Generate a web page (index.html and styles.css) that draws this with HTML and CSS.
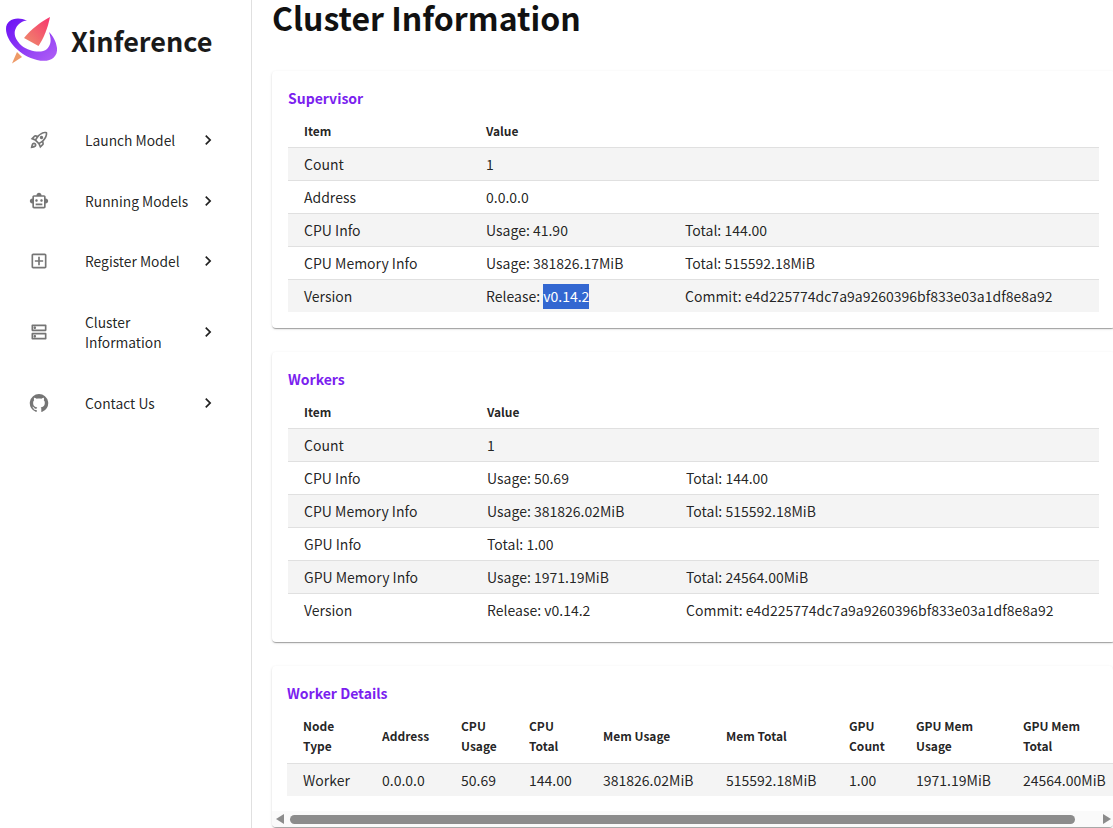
FILE: index.html
```html
<!DOCTYPE html>
<html lang="en">
<head>
<meta charset="utf-8">
<title>Xinference</title>
<link rel="stylesheet" href="styles.css">
</head>
<body>
<div class="app">
  <aside class="sidebar">
    <div class="brand">
      <svg class="logo" viewBox="6 16 52 48" width="52" height="48">
        <defs>
          <linearGradient id="ringGrad" x1="0" y1="0" x2="1" y2="1">
            <stop offset="0" stop-color="#6a10f5"/>
            <stop offset="1" stop-color="#b061f5"/>
          </linearGradient>
          <linearGradient id="kiteGrad" x1="0" y1="1" x2="1" y2="0">
            <stop offset="0" stop-color="#ee8f6c"/>
            <stop offset="1" stop-color="#f7346e"/>
          </linearGradient>
        </defs>
        <path fill="url(#kiteGrad)" d="M50 17 C42 21 31 29 24 38 L38.500 46 C44 38 48 27 50 17Z"/>
        <path fill="#ee9a68" d="M17 52 L22 57 L12 63.500Z"/>
        <path fill="url(#ringGrad)" d="M27 20.500 C17 16 6 19 6 29 C6 41 20 56 37 60 C49 63 58 58 57 48 C56 41 53 36 49 32 C51 38 52 44 47 49 C41 54 29 51 22 46 C15 40 13 33 16 28 C18 24 22 21 27 20.500Z"/>
      </svg>
      <span class="brand-name">Xinference</span>
    </div>
    <nav class="nav">
      <a class="nav-item">
        <svg class="nav-icon" viewBox="0 0 24 24"><path d="M6 15c-.83 0-1.58.34-2.12.88C2.7 17.06 2 22 2 22s4.940-.7 6.120-1.880c.54-.54.88-1.290.88-2.120 0-1.660-1.340-3-3-3zm.71 3.710c-.28.28-2.170.76-2.170.76s.47-1.880.76-2.170c.17-.19.42-.3.7-.3.55 0 1 .45 1 1 0 .28-.11.53-.29.71zm10.710-5.060c6.360-6.360 4.240-11.310 4.240-11.310S16.710.22 10.350 6.580l-2.490-.5c-.65-.13-1.330.08-1.810.55L2 10.690l5 2.140L11.170 17l2.140 5 4.050-4.050c.47-.47.68-1.150.55-1.810l-.49-2.490zM7.410 10.830l-1.910-.82 1.970-1.970 1.440.29c-.57.83-1.080 1.700-1.500 2.500zm6.580 7.670-.82-1.910c.8-.42 1.670-.93 2.490-1.500l.29 1.440-1.960 1.970zM16 12.240c-1.320 1.320-3.380 2.400-4.040 2.730l-2.930-2.930c.32-.65 1.400-2.710 2.730-4.040 4.680-4.680 8.230-3.990 8.230-3.990s.69 3.550-3.990 8.230zM15 11c1.100 0 2-.9 2-2s-.9-2-2-2-2 .9-2 2 .9 2 2 2z"/></svg>
        <span class="nav-text">Launch Model</span>
        <svg class="nav-arrow" viewBox="0 0 24 24"><path d="M8.590 16.590 13.170 12 8.590 7.410 10 6l6 6-6 6z"/></svg>
      </a>
      <a class="nav-item">
        <svg class="nav-icon" viewBox="0 0 24 24"><path d="M20 9V7c0-1.100-.9-2-2-2h-3c0-1.660-1.340-3-3-3S9 3.340 9 5H6c-1.100 0-2 .9-2 2v2c-1.660 0-3 1.340-3 3s1.340 3 3 3v4c0 1.100.9 2 2 2h12c1.100 0 2-.9 2-2v-4c1.660 0 3-1.340 3-3s-1.340-3-3-3zm-2 10H6V7h12v12zm-9-6c-.83 0-1.500-.67-1.500-1.500S8.170 10 9 10s1.500.67 1.500 1.500S9.830 13 9 13zm7.500-1.500c0 .83-.67 1.500-1.500 1.500s-1.500-.67-1.500-1.500.67-1.500 1.500-1.500 1.500.67 1.500 1.500zM8 15h8v2H8v-2z"/></svg>
        <span class="nav-text">Running Models</span>
        <svg class="nav-arrow" viewBox="0 0 24 24"><path d="M8.590 16.590 13.170 12 8.590 7.410 10 6l6 6-6 6z"/></svg>
      </a>
      <a class="nav-item">
        <svg class="nav-icon" viewBox="0 0 24 24"><path d="M19 3H5c-1.110 0-2 .9-2 2v14c0 1.100.89 2 2 2h14c1.100 0 2-.9 2-2V5c0-1.100-.9-2-2-2zm0 16H5V5h14v14zm-8-2h2v-4h4v-2h-4V7h-2v4H7v2h4z"/></svg>
        <span class="nav-text">Register Model</span>
        <svg class="nav-arrow" viewBox="0 0 24 24"><path d="M8.590 16.590 13.170 12 8.590 7.410 10 6l6 6-6 6z"/></svg>
      </a>
      <a class="nav-item nav-item-tall">
        <svg class="nav-icon" viewBox="0 0 24 24"><path d="M19 15v4H5v-4h14m1-2H4c-.55 0-1 .45-1 1v6c0 .55.45 1 1 1h16c.55 0 1-.45 1-1v-6c0-.55-.45-1-1-1zM7 18.500c-.82 0-1.500-.67-1.500-1.500s.68-1.500 1.500-1.500 1.500.67 1.500 1.500-.67 1.500-1.500 1.500zM19 5v4H5V5h14m1-2H4c-.55 0-1 .45-1 1v6c0 .55.45 1 1 1h16c.55 0 1-.45 1-1V4c0-.55-.45-1-1-1zM7 8.500c-.82 0-1.500-.67-1.500-1.500S6.180 5.500 7 5.500s1.500.68 1.500 1.500S7.830 8.500 7 8.500z"/></svg>
        <span class="nav-text">Cluster Information</span>
        <svg class="nav-arrow" viewBox="0 0 24 24"><path d="M8.590 16.590 13.170 12 8.590 7.410 10 6l6 6-6 6z"/></svg>
      </a>
      <a class="nav-item">
        <svg class="nav-icon" viewBox="0 0 24 24"><path d="M12 1.270a11 11 0 00-3.480 21.460c.55.09.73-.28.73-.55v-1.840c-3.030.64-3.670-1.460-3.670-1.460-.55-1.290-1.280-1.650-1.280-1.650-.92-.65.1-.65.1-.65 1.100 0 1.730 1.100 1.730 1.100.92 1.650 2.570 1.200 3.210.92a2 2 0 01.64-1.470c-2.470-.27-5.040-1.190-5.040-5.500 0-1.100.46-2.100 1.200-2.840a3.760 3.760 0 010-2.930s.91-.28 3.110 1.100c1.800-.49 3.700-.49 5.500 0 2.100-1.380 3.020-1.100 3.020-1.100a3.760 3.760 0 010 2.930c.83.74 1.200 1.740 1.200 2.940 0 4.210-2.570 5.130-5.040 5.400.45.37.82.92.82 2.020v3.030c0 .27.1.64.73.55A11 11 0 0012 1.270"/></svg>
        <span class="nav-text">Contact Us</span>
        <svg class="nav-arrow" viewBox="0 0 24 24"><path d="M8.590 16.590 13.170 12 8.590 7.410 10 6l6 6-6 6z"/></svg>
      </a>
    </nav>
  </aside>
  <main class="main">
    <h1 class="title">Cluster Information</h1>

    <section class="card">
      <h2 class="card-title">Supervisor</h2>
      <table class="info-table">
        <colgroup><col class="col-item"><col class="col-value"><col class="col-rest"></colgroup>
        <thead><tr><th>Item</th><th colspan="2">Value</th></tr></thead>
        <tbody>
          <tr><td>Count</td><td colspan="2">1</td></tr>
          <tr><td>Address</td><td colspan="2">0.0.0.0</td></tr>
          <tr><td>CPU Info</td><td>Usage: 41.90</td><td>Total: 144.00</td></tr>
          <tr><td>CPU Memory Info</td><td>Usage: 381826.17MiB</td><td>Total: 515592.18MiB</td></tr>
          <tr><td>Version</td><td>Release: <span class="selected">v0.14.2</span></td><td>Commit: e4d225774dc7a9a9260396bf833e03a1df8e8a92</td></tr>
        </tbody>
      </table>
    </section>

    <section class="card">
      <h2 class="card-title">Workers</h2>
      <table class="info-table">
        <colgroup><col class="col-item-b"><col class="col-value"><col class="col-rest"></colgroup>
        <thead><tr><th>Item</th><th colspan="2">Value</th></tr></thead>
        <tbody>
          <tr><td>Count</td><td colspan="2">1</td></tr>
          <tr><td>CPU Info</td><td>Usage: 50.69</td><td>Total: 144.00</td></tr>
          <tr><td>CPU Memory Info</td><td>Usage: 381826.02MiB</td><td>Total: 515592.18MiB</td></tr>
          <tr><td>GPU Info</td><td colspan="2">Total: 1.00</td></tr>
          <tr><td>GPU Memory Info</td><td>Usage: 1971.19MiB</td><td>Total: 24564.00MiB</td></tr>
          <tr><td>Version</td><td>Release: v0.14.2</td><td>Commit: e4d225774dc7a9a9260396bf833e03a1df8e8a92</td></tr>
        </tbody>
      </table>
    </section>

    <section class="card card-details">
      <div class="details-body">
        <h2 class="card-title">Worker Details</h2>
        <table class="info-table details-table">
          <colgroup>
            <col class="d1"><col class="d2"><col class="d3"><col class="d4"><col class="d5"><col class="d6"><col class="d7"><col class="d8"><col class="d9">
          </colgroup>
          <thead>
            <tr><th>Node Type</th><th>Address</th><th>CPU Usage</th><th>CPU Total</th><th>Mem Usage</th><th>Mem Total</th><th>GPU Count</th><th>GPU Mem Usage</th><th>GPU Mem Total</th></tr>
          </thead>
          <tbody>
            <tr><td>Worker</td><td>0.0.0.0</td><td>50.69</td><td>144.00</td><td>381826.02MiB</td><td>515592.18MiB</td><td>1.00</td><td>1971.19MiB</td><td>24564.00MiB</td></tr>
          </tbody>
        </table>
      </div>
      <div class="scrollbar">
        <span class="arrow-left"></span>
        <span class="thumb"></span>
        <span class="arrow-right"></span>
      </div>
    </section>
  </main>
</div>
</body>
</html>
```

FILE: styles.css
```css
* { box-sizing: border-box; }
html, body { margin: 0; height: 100%; overflow: hidden; background: #fff; }
body {
  font-family: "Noto Sans CJK SC", "Noto Sans", sans-serif;
  color: rgba(0, 0, 0, 0.87);
  font-size: 14px;
  line-height: 20px;
}
.app { display: flex; width: 1115px; height: 828px; overflow: hidden; }

.sidebar { flex: 0 0 252px; border-right: 1px solid #e0e0e0; height: 828px; }
.brand { display: flex; align-items: center; height: 80px; padding-left: 6px; }
.logo { display: block; flex: none; }
.brand-name { margin: 1px 0 0 13px; font-size: 27px; line-height: 40px; font-weight: 700; color: #1a1a1a; }
.nav { display: flex; flex-direction: column; padding-top: 30.150px; }
.nav-item { display: flex; align-items: center; padding: 20.250px 33px 20.250px 29px; color: rgba(0, 0, 0, 0.87); }
.nav-item-tall { padding-bottom: 20.750px; }
.nav-icon { flex: none; width: 20px; height: 20px; fill: rgba(0, 0, 0, 0.54); }
.nav-text { flex: 1; margin-left: 36px; font-size: 13.800px; }
.nav-arrow { flex: none; width: 20px; height: 20px; fill: rgba(0, 0, 0, 0.87); }

.main { flex: 0 0 863px; padding-left: 20px; }
.title { margin: 0 0 36px; font-size: 32px; line-height: 35px; font-weight: 700; color: #111; }
.card {
  background: #fff;
  border-radius: 4px;
  box-shadow: 0 2px 1px -1px rgba(0,0,0,.2), 0 1px 1px 0 rgba(0,0,0,.14), 0 1px 3px 0 rgba(0,0,0,.12);
  padding: 16px;
  margin-bottom: 24px;
}
.card-title { margin: 0; font-size: 14px; line-height: 22px; height: 28px; font-weight: 700; color: #7b1fef; }

.info-table { width: 811px; table-layout: fixed; border-collapse: collapse; border-spacing: 0; }
.col-item { width: 182px; }
.col-item-b { width: 183px; }
.col-value { width: 199px; }
.info-table th, .info-table td { padding: 6px 16px; text-align: left; vertical-align: middle; border-bottom: 1px solid #e0e0e0; white-space: nowrap; }
.info-table th { font-size: 12px; font-weight: 700; }
.info-table tbody tr:nth-child(odd) { background: #f4f4f4; }
.info-table tbody tr:last-child td { border-bottom: 0; }
.selected { background: #3367d1; color: #fff; padding: 2px 0 3px; }

.card-details { width: 841px; padding: 0; margin-bottom: 0; height: 161px; overflow: hidden; display: flex; flex-direction: column; }
.details-body { padding: 16px 0 0 15px; overflow: hidden; flex: none; height: 145px; }
.details-table { width: 835px; }
.details-table th { white-space: normal; padding-bottom: 7px; }
.d1 { width: 79px; } .d2 { width: 79px; } .d3 { width: 68px; } .d4 { width: 74px; }
.d5 { width: 123px; } .d6 { width: 123px; } .d7 { width: 67px; } .d8 { width: 107px; } .d9 { width: 115px; }

.scrollbar { display: flex; align-items: center; height: 16px; padding-left: 4px; padding-right: 2px; background: #fafafa; }
.arrow-left { width: 0; height: 0; border-style: solid; border-width: 5px 8px 5px 0; border-color: transparent #8c8c8c transparent transparent; }
.thumb { width: 785px; height: 9px; margin-left: 6px; border-radius: 5px; background: #8c8c8c; }
.arrow-right { width: 0; height: 0; margin-left: auto; border-style: solid; border-width: 5px 0 5px 8px; border-color: transparent transparent transparent #8c8c8c; }
```
